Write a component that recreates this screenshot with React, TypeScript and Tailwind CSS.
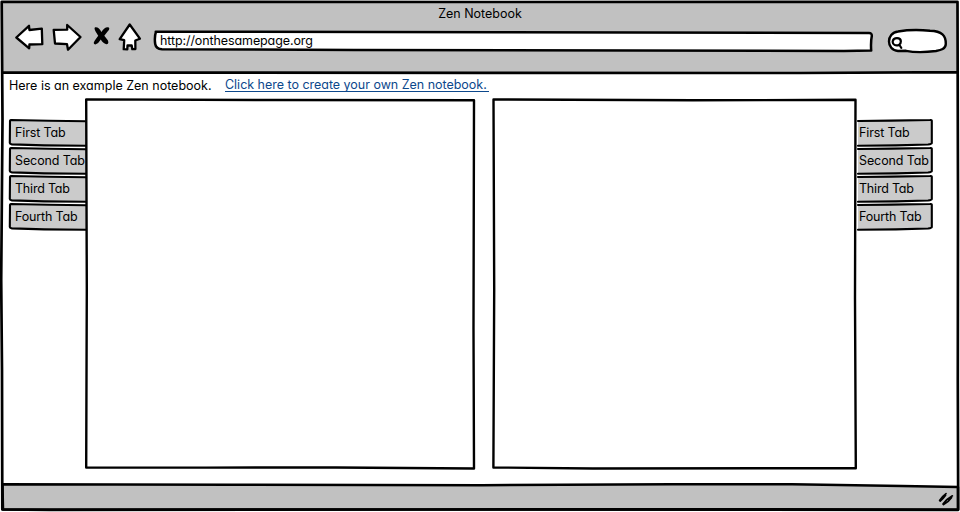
import React from "react";

const tabs = ["First Tab", "Second Tab", "Third Tab", "Fourth Tab"];
const tabTracking = ["tracking-[-0.12px]", "tracking-[-0.1px]", "tracking-[-0.2px]", "tracking-[-0.16px]"];

type SketchProps = { d: string; fill?: string; width?: number };

/** Hand-drawn outline stretched behind the content of a relative box. */
function Sketch({ d, fill = "none", width = 2.4 }: SketchProps) {
  return (
    <svg className="pointer-events-none absolute inset-0 h-full w-full overflow-visible" aria-hidden="true">
      <path d={d} fill={fill} stroke="#000" strokeWidth={width} strokeLinejoin="round" strokeLinecap="round" />
    </svg>
  );
}

function Glyph({ d, className, w, h }: { d: string; className: string; w: number; h: number }) {
  return (
    <svg width={w} height={h} className={`shrink-0 overflow-visible ${className}`} aria-hidden="true">
      <path d={d} fill="#fff" stroke="#000" strokeWidth="2.3" strokeLinejoin="round" strokeLinecap="round" />
    </svg>
  );
}

function TabList({ side }: { side: "left" | "right" }) {
  const left = side === "left";
  const outline = left
    ? "M77 2.2 L40 1.8 L2 1 Q.8 1 1 3 L.8 24 Q.8 25 3 25.4 L35 26.4 L77 26.8"
    : "M2 2 L35 1.6 L74 1 Q76 .8 75.8 2 L75.8 24 Q75.8 25 72 25.5 L40 26.4 L2 26.8";
  return (
    <ul className={`mt-[20px] flex flex-col gap-px ${left ? "w-[77px]" : "w-[76px]"}`}>
      {tabs.map((tab, i) => (
        <li key={tab} className="relative h-[27px]">
          <Sketch d={outline} fill="#cbcbcb" width={2.1} />
          <span
            className={`relative block whitespace-nowrap leading-[28px] ${left ? "pl-[6px]" : "pl-[3px]"} ${tabTracking[i]}`}
          >
            {tab}
          </span>
        </li>
      ))}
    </ul>
  );
}

export default function App() {
  return (
    <div className="relative flex h-[512px] w-[960px] flex-col overflow-hidden bg-white px-[2px] pt-[2px] font-['Inter','Noto_Sans',sans-serif] text-[12.5px] font-normal text-black [font-feature-settings:'cv11','ss03']">
      <header className="relative h-[71px] shrink-0 bg-[#c1c1c1]">
        <h1 className="h-[22px] text-center leading-[23px] tracking-[0px]">Zen Notebook</h1>
        <nav className="flex">
          <Glyph w={28} h={26} className="ml-[13px] mt-px" d="M1.3 12.5 L14 .8 L14.4 5 L26.8 3.6 L27.3 19.2 L14.4 19.5 L14.2 23.3 Z" />
          <Glyph w={28} h={26} className="ml-[10px] mt-px" d="M.7 4.8 L14.2 4.7 L14.2 0 L27.5 12 L15 24.8 L14 19.2 L2 18.5 Z" />
          <svg width="18" height="20" className="ml-[12px] mt-[2px] shrink-0" aria-hidden="true">
            <path
              d="M2.2 1.3 Q6 .8 8.4 6 Q11.5 .8 15.2 1.3 Q17.7 2.4 14.6 5.6 L11.3 9.8 L14.8 14.3 Q16.4 18.4 13.3 18.2 Q9.8 17.5 7.8 13.6 Q5.5 17.7 2.4 18.5 Q-.6 18.2 1.8 14.5 L5.2 9.8 L2.6 5.4 Q.7 2.3 2.2 1.3 Z"
              fill="#000"
            />
          </svg>
          <Glyph w={22} h={27} className="ml-[8px]" d="M10.7 .5 L20.9 14.7 L16.3 16.5 L16.4 25 L13.3 25.2 L12.7 21.5 L8.5 21.5 L8.3 25.4 L4.7 25.2 L5.2 16.2 L.7 15.2 Z" />
          <div className="relative ml-[13px] mt-[7px] h-[20px] w-[719px]">
            <Sketch
              d="M1.7 .7 L220 1 L350 1.2 L715 2 Q718 2 717.8 5 Q716.6 11 717.2 19.6 L690 20 L200 18.9 L8 18.3 Q2 18 1.2 13 Q.2 6 2 .7 Z"
              fill="#fff"
              width={2.5}
            />
            <span className="relative block pl-[6px] leading-[19px] tracking-[-0.1px]">http://onthesamepage.org</span>
          </div>
          <div className="relative ml-[15px] mt-[6px] h-[23px] w-[58px]">
            <Sketch
              d="M10 1.5 Q25 -1 42 .8 C54 1 58 6 57.8 14 C57.6 19 53 20 48 21 Q30 23.4 18 20.8 L10 21 C-2 20 -2 3 10 1.5 Z"
              fill="#fff"
              width={2.4}
            />
            <svg className="relative ml-[3px] mt-[6px]" width="14" height="15" aria-hidden="true">
              <path d="M8.3 8.7 C5 10.6 1 8.5 1.8 5 C2.6 1.2 9.4 1.2 9.8 4.8 Q10 7.6 8.3 8.7 L10.2 11.8" fill="none" stroke="#000" strokeWidth="2.2" strokeLinecap="round" />
            </svg>
          </div>
        </nav>
      </header>

      <main className="flex flex-1 flex-col">
        <div className="flex h-[26px] shrink-0 pl-[7px]">
          <p className="w-[216px] whitespace-nowrap leading-[25px] tracking-[0px]">Here is an example Zen notebook.</p>
          <a className="mt-[3px] h-[16px] w-[264px] whitespace-nowrap border-b border-[#0d488c] leading-[18px] tracking-[-0.02px] text-[#0d488c]">
            Click here to create your own Zen notebook.
          </a>
        </div>
        <div className="flex pl-[7px]">
          <TabList side="left" />
          <section className="relative z-10 h-[370px] w-[388px]">
            <Sketch d="M.2 .4 L190 1 L388 1.2 L387.5 230 L388 369.5 L250 368.5 L120 368.6 L.2 368.6 L.8 190 Z" />
          </section>
          <section className="relative z-10 ml-[19px] h-[370px] w-[363px]">
            <Sketch d="M.5 .4 L200 1.3 L362.5 .8 L362 200 L362.8 369.2 L100 369.5 L.4 368.5 L1.2 190 Z" />
          </section>
          <TabList side="right" />
        </div>
      </main>

      <footer className="relative h-[26px] shrink-0">
        <Sketch d="M.5 -1.7 L230 -1.3 L480 -.8 L670 -1.7 L790 -1.7 L900 0 L956 1 L956 24 L480 23.5 L1 23.5 Z" fill="#c1c1c1" width={2.5} />
        <svg className="relative ml-auto mr-[3px] mt-[6px]" width="17" height="15" aria-hidden="true">
          <path
            d="M1.6 8.4 Q4.5 4 8 1.6 M2.2 9.2 Q5 6.8 7.6 3.2 M5 12 Q8.5 7 14.4 3.8 M5.6 12.6 Q10.6 10 13.6 5.6"
            fill="none"
            stroke="#000"
            strokeWidth="1.7"
            strokeLinecap="round"
          />
        </svg>
      </footer>

      <Sketch d="M1.7 1.8 L480 2 L957.5 1.8 L958 200 L957.8 380 L958.2 509.5 L650 509.4 L420 509.5 L50 510 L2.3 509.5 L2 370 L1.2 280 L2.5 120 Z M2.7 72.5 L480 72.8 L800 73 L957 72.2" width={2.7} />
    </div>
  );
}
